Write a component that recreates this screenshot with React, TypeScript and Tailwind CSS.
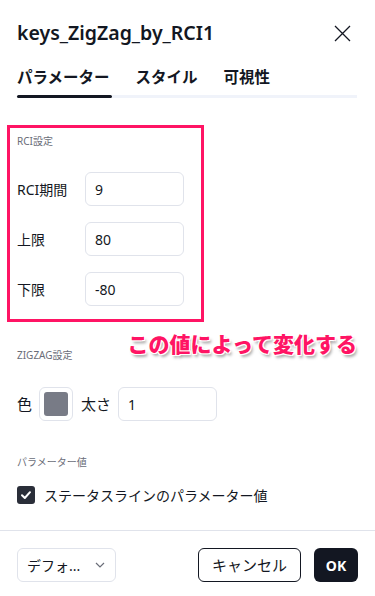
import React from "react";

const font = { fontFamily: '"Noto Sans", "Noto Sans CJK JP", sans-serif' };

function Field({ label, value }: { label: string; value: string }) {
  return (
    <div className="flex items-center h-[34px]">
      <div className="w-[68px] text-[14px] text-[#131722]">{label}</div>
      <div className="w-[99px] h-[34px] rounded-[6px] border border-[#e0e3eb] flex items-center px-[9px] text-[14px] text-[#131722]">
        {value}
      </div>
    </div>
  );
}

export default function App() {
  return (
    <div className="w-[375px] h-[596px] bg-white relative overflow-hidden" style={font}>
      {/* header */}
      <div className="flex items-center justify-between pl-[17px] pr-[24px] pt-[20px] h-[46px]">
        <div className="text-[19.5px] font-semibold text-[#131722] leading-none">keys_ZigZag_by_RCI1</div>
        <svg width="17" height="17" viewBox="0 0 17 17" className="mt-[1px]">
          <path d="M1 1 L16 16 M16 1 L1 16" stroke="#131722" strokeWidth="1.3" />
        </svg>
      </div>
      {/* tabs */}
      <div className="px-[17px] mt-[24px]">
        <div className="flex gap-[26px] text-[15.5px] font-bold text-[#131722] leading-none h-[25px]">
          <span>パラメーター</span>
          <span>スタイル</span>
          <span>可視性</span>
        </div>
        <div className="flex h-[3px] w-[340px]">
          <div className="w-[95px] bg-[#131722] rounded-full" />
          <div className="flex-1 bg-[#f0f3fa]" />
        </div>
      </div>

      {/* RCI box */}
      <div className="ml-[7px] mt-[27px] w-[197px] h-[197px] border-[3px] border-[#ff1464] pl-[7px] pt-[6px]">
        <div className="text-[10px] text-[#6a6d78] leading-[14px]">RCI設定</div>
        <div className="flex flex-col gap-[16px] mt-[24px]">
          <Field label="RCI期間" value="9" />
          <Field label="上限" value="80" />
          <Field label="下限" value="-80" />
        </div>
      </div>

      {/* ZIGZAG */}
      <div className="flex items-start">
        <div className="pl-[17px] pt-[26px] text-[10px] text-[#6a6d78] leading-[14px]">ZIGZAG設定</div>
        <div
          className="ml-[55px] mt-[8px] text-[21px] font-black text-[#ff1464] leading-[28px]"
          style={{
            textShadow:
              "1px 1px 0 #fff, -1px -1px 0 #fff, 1px -1px 0 #fff, -1px 1px 0 #fff, 2px 3px 3px rgba(0,0,0,0.35)",
          }}
        >
          この値によって変化する
        </div>
      </div>
      <div className="flex items-center pl-[17px] mt-[25px] h-[34px]">
        <span className="text-[15px] text-[#131722]">色</span>
        <div className="ml-[7px] w-[34px] h-[34px] rounded-[6px] border border-[#e0e3eb] flex items-center justify-center">
          <div className="w-[24px] h-[24px] rounded-[3px] bg-[#787b86]" />
        </div>
        <span className="ml-[8px] text-[15px] text-[#131722]">太さ</span>
        <div className="ml-[7px] w-[99px] h-[34px] rounded-[6px] border border-[#e0e3eb] flex items-center px-[9px] text-[14px] text-[#131722]">
          1
        </div>
      </div>

      <div className="pl-[17px] mt-[34px] text-[10px] text-[#6a6d78] leading-[14px]">パラメーター値</div>
      <div className="flex items-center pl-[17px] mt-[16px] h-[20px]">
        <div className="w-[18px] h-[18px] rounded-[3px] bg-[#2a2e39] flex items-center justify-center">
          <svg width="12" height="12" viewBox="0 0 12 12">
            <path d="M2 6.3 L4.8 9 L10 3.2" stroke="#fff" strokeWidth="2" fill="none" strokeLinecap="round" strokeLinejoin="round" />
          </svg>
        </div>
        <span className="ml-[9px] text-[14px] text-[#131722]">ステータスラインのパラメーター値</span>
      </div>

      {/* footer */}
      <div className="absolute left-0 right-0 top-[530px] border-t border-[#e0e3eb]" />
      <div className="absolute left-0 right-0 top-[548px] flex items-center px-[17px]">
        <div className="w-[99px] h-[34px] rounded-[6px] border border-[#e0e3eb] flex items-center justify-between pl-[9px] pr-[10px] text-[14px] text-[#131722]">
          <span>デフォ...</span>
          <svg width="10" height="6" viewBox="0 0 10 6">
            <path d="M1 1 L5 5 L9 1" stroke="#6a6d78" strokeWidth="1.2" fill="none" />
          </svg>
        </div>
        <div className="flex-1" />
        <div className="w-[103px] h-[34px] rounded-[6px] border border-[#131722] flex items-center justify-center text-[15px] text-[#131722]">
          キャンセル
        </div>
        <div className="ml-[13px] w-[44px] h-[34px] rounded-[6px] bg-[#131722] flex items-center justify-center text-[14px] font-bold text-white">
          OK
        </div>
      </div>
    </div>
  );
}
